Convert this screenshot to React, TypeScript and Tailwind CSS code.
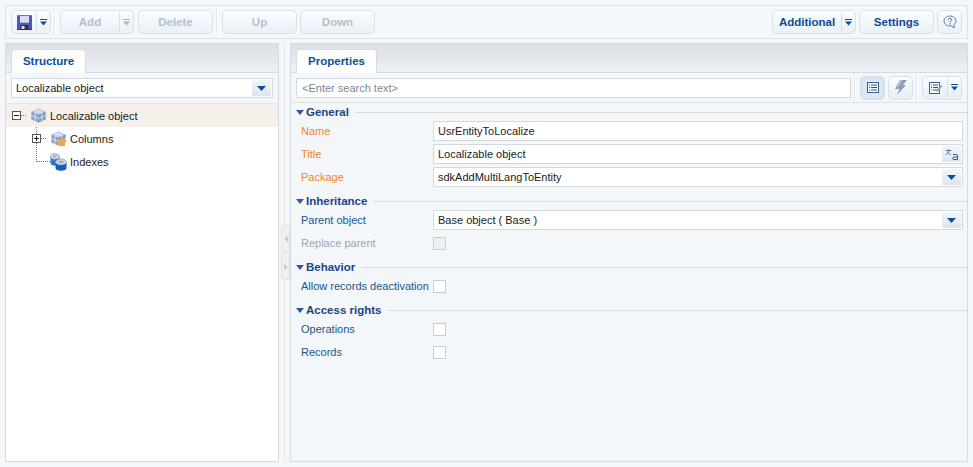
import React from "react";

const font = "font-['Liberation_Sans','Noto_Sans',sans-serif]";

function Caret({ color = "#0b4f9e", w = 9 }: { color?: string; w?: number }) {
  return (
    <svg width={w} height="7" viewBox="0 0 7 7" className="shrink-0">
      <rect x="0" y="0" width="7" height="1" fill={color} />
      <path d="M0 2.500h7L3.500 6.500z" fill={color} />
    </svg>
  );
}

function Btn({ label, w, disabled, split }: { label: string; w: string; disabled?: boolean; split?: boolean }) {
  return (
    <div className={`${w} h-[24px] flex items-stretch rounded-[5px] border border-[#d7e1ec] bg-gradient-to-b from-[#fbfdfe] to-[#e9f0f7] text-[11.500px] font-bold ${disabled ? "text-[#b4bfcc]" : "text-[#0c4c94]"}`}>
      <div className="flex-1 flex items-center justify-center pt-[1px]">{label}</div>
      {split && (
        <div className="w-[14px] my-[1px] border-l border-[#d7e1ec] flex items-center justify-center">
          <Caret color={disabled ? "#aab6c4" : "#0b4f9e"} w={7} />
        </div>
      )}
    </div>
  );
}

function Sep() {
  return <div className="w-[2px] h-[28px] bg-[#e3e7ea] border-r border-white mx-[3px]" />;
}

function Floppy() {
  return (
    <svg width="15" height="15" viewBox="0 0 15 15">
      <rect x="0" y="0" width="15" height="15" fill="#5455b8" />
      <rect x="0" y="0" width="15" height="1" fill="#6f72cc" />
      <rect x="0" y="14" width="15" height="1" fill="#33348c" />
      <rect x="3" y="1" width="9" height="7" fill="#d8def2" />
      <rect x="3" y="7" width="9" height="1" fill="#aeb6de" />
      <rect x="3.500" y="10" width="8" height="5" fill="#2e2e4a" />
      <rect x="4.500" y="11" width="3" height="3" fill="#dcdce6" />
    </svg>
  );
}

function Cubes({ orange }: { orange?: boolean }) {
  return (
    <svg width="15" height="15" viewBox="0 0 15 15" className="shrink-0">
      <path d="M0.500 3.500L7.500 0.500l7 3v8l-7 3-7-3z" fill="#9fb5d2" />
      <path d="M0.500 3.500l7 3v8l-7-3z" fill="#8aa4c8" />
      <path d="M7.500 6.500l7-3v8l-7 3z" fill="#7f9abf" />
      <path d="M0.500 3.500L7.500 0.500l7 3-7 3z" fill="#c4d2e3" />
      <path d="M4 2l7 3M11 2L4 5M4 5v8M11 5v8M0.500 7.500l7 3 7-3" stroke="#e6ecf4" strokeWidth="0.800" fill="none" />
      {orange && <rect x="7" y="8" width="7" height="7" fill="#f4a64a" />}
    </svg>
  );
}

function Cylinders() {
  return (
    <svg width="17" height="18" viewBox="0 0 17 18" className="shrink-0">
      <path d="M0.500 4v6c0 1.600 2 2.600 4.500 2.600S9.500 11.600 9.500 10V4z" fill="#2a78cc" />
      <ellipse cx="5" cy="3.500" rx="4.500" ry="2.800" fill="#d3dae2" stroke="#7f95ad" strokeWidth="0.700" />
      <ellipse cx="5" cy="3.300" rx="2.200" ry="1.100" fill="#9aabbd" />
      <path d="M5.500 9.500v5.500c0 1.700 2.300 2.800 5.500 2.800s5.500-1.100 5.500-2.800V9.500z" fill="#0e62bd" />
      <ellipse cx="11" cy="9" rx="5.500" ry="3" fill="#d3dae2" stroke="#7f95ad" strokeWidth="0.700" />
      <ellipse cx="11" cy="8.800" rx="2.700" ry="1.300" fill="#9aabbd" />
    </svg>
  );
}

function PlusMinus({ plus }: { plus?: boolean }) {
  return (
    <div className="w-[9px] h-[9px] border border-[#555] bg-white relative shrink-0">
      <div className="absolute left-[1px] right-[1px] top-[3px] h-[1px] bg-[#222]" />
      {plus && <div className="absolute top-[1px] bottom-[1px] left-[3px] w-[1px] bg-[#222]" />}
    </div>
  );
}

function DotsH({ w }: { w: string }) {
  return <div className={`${w} border-t border-dotted border-[#777] shrink-0`} />;
}

function TabHeader({ label, w }: { label: string; w: string }) {
  return (
    <div className="h-[29px] shrink-0 bg-gradient-to-b from-[#dbdfe5] to-[#edf0f3] border-b border-[#d6dbe0] px-[5px] pt-[6px] flex items-end">
      <div className={`${w} h-[24px] -mb-[1px] bg-gradient-to-b from-[#fbfcfd] to-white border border-b-0 border-[#d6dbe0] rounded-t-[4px] flex items-center justify-center text-[11.500px] font-bold text-[#0b4f9e]`}>
        {label}
      </div>
    </div>
  );
}

function ComboArrow() {
  return (
    <div className="w-[19px] my-[1px] mr-[1px] bg-gradient-to-b from-[#f3f6f9] to-[#dde5ec] flex items-center justify-center">
      <svg width="9" height="5" viewBox="0 0 9 5"><path d="M0 0h9L4.500 5z" fill="#0b4f9e" /></svg>
    </div>
  );
}

function Field({ value, arrow, translate, row }: { value: string; arrow?: boolean; translate?: boolean; row?: boolean }) {
  return (
    <div className={`flex-1 h-[20px] bg-white border border-[#d3d9de] flex items-stretch text-[11px] text-[#1a1a1a] ${row ? "self-start mt-[1px]" : ""}`}>
      <div className="flex-1 flex items-center pl-[4px] pt-[1px] whitespace-nowrap">{value}</div>
      {arrow && <ComboArrow />}
      {translate && (
        <div className="w-[19px] my-[1px] mr-[1px] bg-gradient-to-b from-[#f3f6f9] to-[#dde5ec] flex items-center justify-center">
          <svg width="14" height="11" viewBox="0 0 14 11" fill="none">
            <path d="M0.500 1.500h6M3.500 0v1.500M1 6l4-4.500M2 2.500L6 6" stroke="#5c7393" strokeWidth="0.900" />
            <path d="M8 5.500h3.500q1 0 1 1V10.500h-3.500q-1.200 0-1.200-1.200T9 8h3.500" stroke="#2f5f95" strokeWidth="1" />
          </svg>
        </div>
      )}
    </div>
  );
}

function Check({ disabled }: { disabled?: boolean }) {
  return <div className={`w-[13px] h-[13px] border border-[#c6ced6] ${disabled ? "bg-[#eef1f4]" : "bg-white"}`} />;
}

function Row({ label, tone = "blue", children }: { label: string; tone?: "blue" | "orange" | "gray"; children: React.ReactNode }) {
  const color = tone === "orange" ? "text-[#f5822a]" : tone === "gray" ? "text-[#9aa6b4]" : "text-[#18558f]";
  return (
    <div className="h-[23px] flex items-center pl-[10px] pr-[4px]">
      <div className={`w-[132px] shrink-0 -mt-[1px] text-[11px] whitespace-nowrap ${color}`}>{label}</div>
      {children}
    </div>
  );
}

function Group({ title, first, children }: { title: string; first?: boolean; children: React.ReactNode }) {
  return (
    <div className={first ? "" : "mt-[3px]"}>
      <div className="h-[17px] flex items-center pl-[5px] pt-[2px]">
        <svg width="8" height="5" viewBox="0 0 8 5" className="shrink-0"><path d="M0 0h8L4 5z" fill="#2e58a6" /></svg>
        <span className="ml-[2px] text-[11.500px] font-bold text-[#1c4587] whitespace-nowrap">{title}</span>
        <div className="flex-1 ml-[6px] h-[1px] bg-[#d5dbe1]" />
      </div>
      {children}
    </div>
  );
}

function IconBtn({ active, children }: { active?: boolean; children: React.ReactNode }) {
  return (
    <div className={`w-[25px] h-[24px] rounded-[5px] border border-[#d7e1ec] flex items-center justify-center ${active ? "bg-[#dce8f4] shadow-[inset_0_0_3px_#c3d4e6]" : "bg-gradient-to-b from-[#fbfdfe] to-[#e6edf5]"}`}>
      {children}
    </div>
  );
}

function ListIcon() {
  return (
    <svg width="12" height="11" viewBox="0 0 12 11" fill="none">
      <rect x="0.500" y="0.500" width="11" height="10" fill="#fff" stroke="#3f5f8c" />
      <path d="M2 3h1M4 3h6M2 5.500h1M4 5.500h6M2 8h1M4 8h6" stroke="#2d5488" />
    </svg>
  );
}

function Lightning() {
  return (
    <svg width="12" height="15" viewBox="0 0 12 15">
      <path d="M5 0h7L8 5h3L2 15l2.500-6H0z" fill="#8b9db8" />
      <path d="M5 0h2.500L3.500 7H1z" fill="#b3bfd0" />
    </svg>
  );
}

function EditList() {
  return (
    <svg width="14" height="12" viewBox="0 0 14 12" fill="none">
      <rect x="0.500" y="0.500" width="10" height="11" fill="#fff" stroke="#3f5f8c" />
      <path d="M2 3h1M4 3h5M2 5.500h1M4 5.500h5M2 8h1M4 8h5" stroke="#2d5488" />
      <path d="M7 9l5-6 1.500 1-5 6z" fill="#8ea3bf" />
    </svg>
  );
}

function Help() {
  return (
    <svg width="14" height="14" viewBox="0 0 14 14" fill="none">
      <path d="M7 1C3.500 1 1 3.200 1 6s2.500 5 5.500 5c.6 0 1.200 0 1.700-.2L11 13v-3.500C12.300 8.500 13 7.300 13 6c0-2.800-2.500-5-6-5z" stroke="#5f7fa6" />
      <path d="M5.200 4.800C5.300 3.800 6 3.300 7 3.300s1.800.6 1.800 1.500c0 1.300-1.800 1.300-1.800 2.700M7 8.300v1.100" stroke="#3f6692" />
    </svg>
  );
}

export default function App() {
  return (
    <div className={`${font} relative w-[973px] h-[467px] overflow-hidden bg-[#f3f7fa] px-[5px] pt-[5px] pb-[5px] flex flex-col gap-[4px]`}>
      {/* toolbar */}
      <div className="h-[34px] shrink-0 w-[963px] border border-[#dfe3e7] bg-[#f5f8fa] flex items-center pl-[5px] pr-[5px]">
        <div className="w-[40px] h-[24px] flex rounded-[5px] border border-[#d7e1ec] bg-gradient-to-b from-[#fbfdfe] to-[#e9f0f7]">
          <div className="flex-1 flex items-center justify-center pl-[1px]"><Floppy /></div>
          <div className="w-[14px] my-[1px] border-l border-[#d7e1ec] flex items-center justify-center"><Caret w={7} /></div>
        </div>
        <Sep />
        <div className="w-[1px]" />
        <Btn label="Add" w="w-[74px]" disabled split />
        <div className="w-[4px]" />
        <Btn label="Delete" w="w-[75px]" disabled />
        <Sep />
        <div className="w-[1px]" />
        <Btn label="Up" w="w-[75px]" disabled />
        <div className="w-[3px]" />
        <Btn label="Down" w="w-[75px]" disabled />
        <div className="flex-1" />
        <Btn label="Additional" w="w-[84px]" split />
        <div className="w-[3px]" />
        <Btn label="Settings" w="w-[75px]" />
        <div className="w-[3px]" />
        <div className="w-[25px] h-[24px] rounded-[5px] border border-[#d7e1ec] bg-gradient-to-b from-[#fbfdfe] to-[#e9f0f7] flex items-center justify-center"><Help /></div>
      </div>

      {/* panels */}
      <div className="flex-1 min-h-0 w-[963px] flex">
        {/* left */}
        <div className="w-[274px] shrink-0 border border-[#d6dbe0] bg-white flex flex-col">
          <TabHeader label="Structure" w="w-[75px]" />
          <div className="h-[31px] shrink-0 bg-[#f4f7f9] border-b border-[#e3e7ea] px-[5px] pt-[5px]">
            <div className="flex h-[20px]"><Field value="Localizable object" arrow /></div>
          </div>
          <div className="flex-1 text-[11px] text-[#1a1a1a]">
            <div className="h-[23px] bg-[#f5f0ea] flex items-center pl-[6px]">
              <PlusMinus />
              <DotsH w="w-[5px]" />
              <div className="ml-[5px]"><Cubes /></div>
              <span className="ml-[4px] pt-[2px]">Localizable object</span>
            </div>
            <div className="relative">
              <div className="absolute left-[30px] top-0 h-[35px] border-l border-dotted border-[#777]" />
              <div className="h-[23px] flex items-center pl-[26px]">
                <PlusMinus plus />
                <DotsH w="w-[5px]" />
                <div className="ml-[5px]"><Cubes orange /></div>
                <span className="ml-[4px] pt-[2px]">Columns</span>
              </div>
              <div className="h-[23px] flex items-center pl-[31px]">
                <DotsH w="w-[13px]" />
                <div className="shrink-0"><Cylinders /></div>
                <span className="ml-[3px] pt-[2px]">Indexes</span>
              </div>
            </div>
          </div>
        </div>

        {/* splitter */}
        <div className="w-[11px] shrink-0 relative flex justify-center">
          <div className="w-[1px] h-full bg-[#e3e7ea]" />
          <div className="absolute left-[2px] top-[182px] w-[9px] h-[55px] flex flex-col gap-[1px]">
            <div className="flex-1 bg-[#eef1f4] border border-[#e0e4e8] rounded-l-[2px] flex items-center justify-center">
              <svg width="4" height="6" viewBox="0 0 4 6"><path d="M4 0v6L0 3z" fill="#c3cbd3" /></svg>
            </div>
            <div className="flex-1 bg-[#eef1f4] border border-[#e0e4e8] rounded-l-[2px] flex items-center justify-center">
              <svg width="4" height="6" viewBox="0 0 4 6"><path d="M0 0v6l4-3z" fill="#c3cbd3" /></svg>
            </div>
          </div>
        </div>

        {/* right */}
        <div className="flex-1 border border-[#d6dbe0] bg-[#f4f7f9] flex flex-col">
          <TabHeader label="Properties" w="w-[81px]" />
          <div className="h-[30px] shrink-0 border-b border-[#dfe3e7] flex items-center pl-[5px] pr-[4px]">
            <div className="w-[555px] h-[20px] bg-white border border-[#d3d9de] flex items-center pl-[5px] pt-[1px] text-[11px] text-[#7d8793] whitespace-nowrap">&lt;Enter search text&gt;</div>
            <Sep />
            <div className="w-[1px]" />
            <IconBtn active><ListIcon /></IconBtn>
            <div className="w-[3px]" />
            <IconBtn><Lightning /></IconBtn>
            <Sep />
            <div className="w-[1px]" />
            <div className="w-[40px] h-[24px] flex rounded-[5px] border border-[#d7e1ec] bg-gradient-to-b from-[#fbfdfe] to-[#e6edf5]">
              <div className="flex-1 flex items-center justify-center pl-[1px]"><EditList /></div>
              <div className="w-[14px] my-[1px] border-l border-[#d7e1ec] flex items-center justify-center"><Caret w={7} /></div>
            </div>
          </div>
          <div className="flex-1">
            <Group title="General" first>
              <Row label="Name" tone="orange"><Field row value="UsrEntityToLocalize" /></Row>
              <Row label="Title" tone="orange"><Field row value="Localizable object" translate /></Row>
              <Row label="Package" tone="orange"><Field row value="sdkAddMultiLangToEntity" arrow /></Row>
            </Group>
            <Group title="Inheritance">
              <Row label="Parent object"><Field row value="Base object ( Base )" arrow /></Row>
              <Row label="Replace parent" tone="gray"><Check disabled /></Row>
            </Group>
            <Group title="Behavior">
              <Row label="Allow records deactivation"><Check /></Row>
            </Group>
            <Group title="Access rights">
              <Row label="Operations"><Check /></Row>
              <Row label="Records"><Check /></Row>
            </Group>
          </div>
        </div>
      </div>
    </div>
  );
}
